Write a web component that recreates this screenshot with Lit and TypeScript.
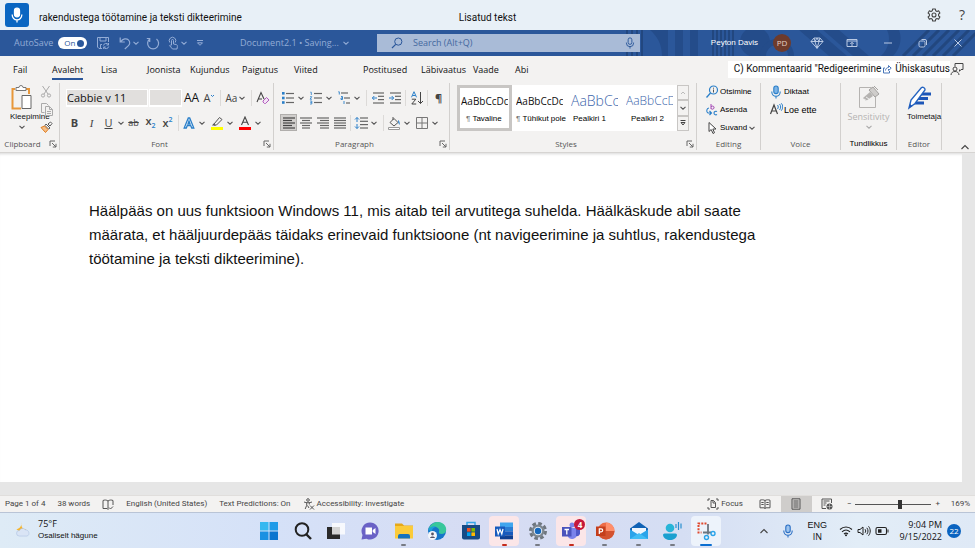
import { LitElement, html, svg, css, TemplateResult, SVGTemplateResult } from "lit";
import { customElement } from "lit/decorators.js";
import { classMap } from "lit/directives/class-map.js";

const art = (w: number, h: number, body: SVGTemplateResult, box = `0 0 ${w} ${h}`) =>
  html`<svg class="art" width=${w} height=${h} viewBox=${box} fill="none" aria-hidden="true">${body}</svg>`;

const chev = (color = "#555") =>
  art(8, 8, svg`<path d="M1.5 2.8 4 5.2 6.5 2.8" stroke=${color} stroke-width="1.1"/>`);

const lines = (rows: number[][], color = "#666") =>
  rows.map(([x1, x2, y]) => svg`<path d="M${x1} ${y}H${x2}" stroke=${color} stroke-width="1.2"/>`);

const mic = (color: string, fill = "none", s = 14) =>
  art(s, s, svg`
    <rect x="4.8" y="1" width="4.4" height="7.6" rx="2.2" stroke=${color} fill=${fill} stroke-width="1.1"/>
    <path d="M2.8 6.5v.6a4.2 4.2 0 0 0 8.4 0v-.6M7 11.3V13.5" stroke=${color} stroke-width="1.1"/>`, "0 0 14 14");

const I = {
  gear: art(14, 14, svg`<g stroke="#444" stroke-width="1.1" stroke-linejoin="round"><path d="M5.7 1h2.6l.4 1.7 1.3.7 1.6-.6 1.3 2.2-1.3 1.2v1.6l1.3 1.2-1.3 2.2-1.6-.6-1.3.7-.4 1.7H5.7l-.4-1.7-1.3-.7-1.6.6L1.1 9l1.3-1.2V6.2L1.1 5l1.3-2.2 1.6.6 1.3-.7z"/><circle cx="7" cy="7" r="2"/></g>`),
  save: art(14, 14, svg`<g stroke="#93acd6"><path d="M12.5 6V1.5h-11V11l1.5 1.5h3M4 1.5V5h6V1.5M4.5 12V8.5H6"/><path d="M7.5 9.5a2.6 2.6 0 0 1 4.8-.8M12.7 10.5a2.6 2.6 0 0 1-4.8.8M12.5 7v2h-2M7.7 13v-2h2"/></g>`),
  undo: art(14, 14, svg`<path d="M2.2 1.5V6h4.6M2.5 5.8C5 2.5 8.5 2 10.4 3.9s1.7 4.3-.2 6L6.8 13" stroke="#93acd6" stroke-width="1.2"/>`),
  redo: art(14, 14, svg`<path d="M3.7 3A5.5 5.5 0 1 0 10.5 3M3.7 6V2.5H.8M10.5 3" stroke="#93acd6" stroke-width="1.2"/>`),
  touch: art(14, 14, svg`<g stroke="#93acd6"><path d="M5.5 9V4.5a1 1 0 0 1 2 0V8l2.8.6c1 .3 1.2 1 1.1 1.9L11 13H6.5L3.5 9.6c.5-.7 1.3-.6 2 .2"/><path d="M3.8 6.5a3.3 3.3 0 1 1 5.4 0"/></g>`),
  more: art(8, 8, svg`<path d="M1 1.5h6M1.5 3.8h5L4 6.3z" stroke="#93acd6"/>`),
  searchBlue: art(12, 12, svg`<circle cx="7.3" cy="4.6" r="3.6" stroke="#2b579a"/><path d="M4.7 7.3 1 11" stroke="#2b579a" stroke-width="1.2"/>`),
  gem: art(14, 12, svg`<path d="M4 1h6l3 3.5-6 6.8L1 4.5zM1 4.5h12M4 1l1 3.5 2 6.8 2-6.8L10 1M7 1 5 4.5M7 1l2 3.5" stroke="#c4d2ea" stroke-width=".9"/>`),
  present: art(12, 10, svg`<path d="M1 1.5h10v7H1zM1 3h10M6 8V4.5M4.3 6 6 4.3 7.7 6" stroke="#b9c9e4"/>`),
  min: art(10, 10, svg`<path d="M1 5h8" stroke="#b9c9e4"/>`),
  restore: art(10, 10, svg`<rect x="1" y="3" width="6" height="6" rx="1.5" stroke="#b9c9e4"/><path d="M3.5 1.5h3.5a1.5 1.5 0 0 1 1.5 1.5v4" stroke="#b9c9e4"/>`),
  close: art(10, 10, svg`<path d="m1.5 1.5 7 7m0-7-7 7" stroke="#b9c9e4"/>`),
  share: art(10, 10, svg`<path d="M3 4H1.5v5h6V7M3.5 6.5C3.7 4.5 5 3.5 6.5 3.5V1.5L9.2 4.2 6.5 6.5v-1.5" stroke="#4a76b8"/>`),
  person: art(14, 14, svg`<g stroke="#444"><path d="M5 4.5V1.5h8v6h-2l-1.5 1.8V7.5"/><circle cx="5" cy="7" r="2"/><path d="M1 13c.2-2.4 1.7-3.5 4-3.5S8.8 10.6 9 13"/></g>`),
  paste: art(24, 26, svg`<path d="M5 4H2.5v19.5H11M16 4h3v5" stroke="#e8973a" stroke-width="2"/><path d="M6 5.5v-3h3a2 2 0 0 1 4 0h3v3z" fill="#fff" stroke="#777"/><path d="M12 10.5h9v13h-9z" fill="#fff" stroke="#666"/>`),
  cut: art(12, 13, svg`<path d="M2.5 1 8 9M9.5 1 4 9" stroke="#aaa"/><circle cx="3" cy="10.5" r="1.6" stroke="#aaa"/><circle cx="9" cy="10.5" r="1.6" stroke="#aaa"/>`),
  copy: art(14, 13, svg`<path d="M4.5 9.5h-3v-9h5l2 2M5.5 3.5h4l3 3v6h-7zM9.5 3.5v3h3" stroke="#aaa"/><path d="M7 8.5h4M7 10.5h4" stroke="#aaa"/>`),
  brush: art(13, 12, svg`<path d="m8 3 2.5-2L12 2.5 10 5z" stroke="#555" fill="#fff"/><path d="m6 3 4 4-1.5 1L5 4.5z" fill="#fff" stroke="#555"/><path d="M4.5 5 8 8.5 5.5 11.5 1 6.5z" fill="#f4c08a" stroke="#e07b1c"/>`),
  launcher: art(8, 8, svg`<path d="M1 6V1h5M3 3l4 4M7 3.8V7H3.8" stroke="#666"/>`),
  eraser: art(14, 14, svg`<path d="M1 11 5 1.5 8 8M2.3 8H6" stroke="#444" stroke-width="1.1"/><path d="m7 10 3.5-3.5 2.5 2.5L9.5 12.5H8.5L7 11z" fill="#f3e3f5" stroke="#b05bbd"/>`),
  glow: art(14, 14, svg`<path d="M2.2 12 6.3 2h1.4L11.8 12H9.7L8.7 9.5H5.3L4.3 12zM7 5 6 7.8h2z" fill="#fff" stroke="#2a7fc9" stroke-width="1.3"/>`),
  pen: art(14, 14, svg`<path d="m4 8 5.5-6.5L12 3.5 6.5 9H4z" stroke="#555"/><path d="M3.5 7.5 2 9.5h4" fill="#555"/><path d="M1 11h12v3H1z" fill="#ffff00"/>`),
  fontColor: art(14, 14, svg`<path d="M3.5 9 7 1l3.5 8M4.7 6.3h4.6" stroke="#444" stroke-width="1.1"/><path d="M1 11h12v3H1z" fill="#f00"/>`),
  bullets: art(14, 14, svg`${lines([[5, 13, 2.5], [5, 13, 7], [5, 13, 11.5]])}<g fill="#2a7fc9"><rect x="1" y="1" width="2.6" height="2.6"/><rect x="1" y="5.7" width="2.6" height="2.6"/><rect x="1" y="10.2" width="2.6" height="2.6"/></g>`),
  numbers: art(14, 14, svg`${lines([[5, 13, 2.5], [5, 13, 7], [5, 13, 11.5]])}<path d="M1.3 1.2h1V4M1 5.7h1.8L1 8.2h2M1 10h1.8v3H1M1.3 11.5h1.5" stroke="#2a7fc9" stroke-width=".8"/>`),
  levels: art(14, 14, svg`${lines([[4, 11, 2], [7, 13, 7], [9, 13, 12]])}<path d="M1.3.8h1v2.7M4 5.5h1.5v3H4V7h1.5M7 10v3" stroke="#2a7fc9" stroke-width=".9"/>`),
  outdent: art(14, 14, svg`${lines([[2, 13, 2], [7, 13, 5.3], [7, 13, 8.6], [2, 13, 12]])}<path d="M6 7H1.5M3.3 5 1.3 7l2 2" stroke="#2a7fc9"/>`),
  indent: art(14, 14, svg`${lines([[2, 13, 2], [7, 13, 5.3], [7, 13, 8.6], [2, 13, 12]])}<path d="M1 7h4.5M3.7 5l2 2-2 2" stroke="#2a7fc9"/>`),
  sort: art(14, 14, svg`<path d="M1.5 6.3 4 .7l2.5 5.6M2.5 4.5h3" stroke="#2a7fc9"/><path d="M1.8 8.2h4L1.8 13h4.4M10.5 1v11.5M8 10l2.5 2.5L13 10" stroke="#444"/>`),
  left: art(14, 14, svg`${lines([[1, 13, 2], [1, 10, 4.5], [1, 13, 7], [1, 10, 9.5], [1, 13, 12]], "#444")}`),
  center: art(14, 14, svg`${lines([[1, 13, 2], [3, 11, 4.5], [1, 13, 7], [3, 11, 9.5], [3, 11, 12]])}`),
  right: art(14, 14, svg`${lines([[1, 13, 2], [4, 13, 4.5], [1, 13, 7], [4, 13, 9.5], [4, 13, 12]])}`),
  justify: art(14, 14, svg`${lines([[1, 13, 2], [1, 13, 4.5], [1, 13, 7], [1, 13, 9.5], [1, 13, 12]])}`),
  spacing: art(14, 14, svg`${lines([[6, 14, 2], [6, 14, 5.3], [6, 14, 8.6], [6, 14, 12]])}<path d="M3 1.5v4.5M1 3.5l2-2 2 2M3 12.5V8M1 10.5l2 2 2-2" stroke="#2a7fc9"/>`),
  bucket: art(14, 14, svg`<path d="M6 1v3M3 6.5 7 2.5l4 4L7 10z" stroke="#555"/><path d="M11 4c1.5 1 2 2.5 1.5 5-1-1-1.5-3-1.5-5z" fill="#2a7fc9"/><path d="M1.5 11.5h11v2h-11z" fill="#fff" stroke="#999"/>`),
  borders: art(14, 14, svg`<path d="M1.5 1.5h11v11h-11zM7 1.5v11M1.5 7h11" stroke="#777"/>`),
  find: art(14, 14, svg`<circle cx="8.5" cy="5" r="4" stroke="#2a7fc9" stroke-width="1.2"/><path d="M5.5 8 1.5 12.5" stroke="#2a7fc9" stroke-width="1.3"/><path d="M8.5 4.5v3M8.5 2.7v1" stroke="#555"/>`),
  replace: art(14, 14, svg`<path d="M6 1v5M6 3.5c2-1 3.5 0 3 1.5S7 6.5 6 5.5" stroke="#a347b5"/><path d="M4 5C1.5 5 1 9 3 10h3M4.5 8 6.5 10l-2 2M12 8.500c-1.500-.8-3 .2-3 1.500s1.500 2.500 3 1.500" stroke="#2a7fc9" stroke-width="1.1"/>`),
  cursor: art(14, 14, svg`<path d="M4 1.5v9l2.2-2L8 12.5l1.5-.8L7.8 8H11z" stroke="#444" fill="#fff"/>`),
  read: art(14, 14, svg`<path d="M1.5 11 5 2l3.5 9M2.7 8h4.6" stroke="#444" stroke-width="1.2"/><path d="M8.5 2c1 1.2 1 2.8 0 4M10.5 1c1.6 1.8 1.6 4.2 0 6M12.3.3c2 2.3 1.7 5 0 7.4" stroke="#2a7fc9"/>`),
  sensitivity: art(24, 24, svg`<path d="M2.5 2.5h12M2.5 2.5v20h16V12" stroke="#b5b3b1" fill="none"/><path d="m6 13 7-6 3 4-7 5z" fill="#b5b3b1"/><path d="m12 5 4-3 6 7-4 3zM17 1l4 4" fill="#cfcdcb" stroke="#a3a19f"/><path d="m7 14 3 2M9 12l3 2" stroke="#eee"/>`),
  editor: art(24, 26, svg`<path d="M13 9h11M10 13.5h11M6.500 18H17" stroke="#1d56b8" stroke-width="3"/><path d="M2 23 4 15 14.500 2.500c1.500-1 4 .8 3.500 2.500L8 18.500z" fill="#fff" stroke="#2463c0" stroke-width="1.4"/><path d="m2 23 1-4 2.5 2z" fill="#1d56b8"/>`),
  up: art(10, 10, svg`<path d="m1.5 7 3.5-3.5L8.5 7" stroke="#444" stroke-width="1.1"/>`),
  book: art(12, 11, svg`<path d="M6 2C4.5.8 2.5.8 1 1.5V9.5H5L6 10.5V2zM6 2C7.5.8 9.5.8 11 1.5V6M7 8.5l1.5 1.5L11 7.5" stroke="#555"/>`),
  access: art(12, 12, svg`<circle cx="5" cy="2" r="1.3" stroke="#555"/><path d="M1 4c2.5 1 5.5 1 8 0M3.7 4.8v2.5L2.2 11M6.3 4.8v1.7M7 7.5l4 4m0-4-4 4M4.500 7.500 6 10" stroke="#555"/>`),
  focus: art(12, 12, svg`<path d="M3 1H1v2M9 1h2v2M3 11H1V9M9 11h2V9M4 2.5h2.5L8.5 4.5v5H4zM6 2.5V5h2" stroke="#555"/>`),
  reading: art(12, 10, svg`<path d="M6 1.5C4.5.6 2.5.6 1 1.2v7.6H5L6 9.5l1-.7h4V1.2C9.5.6 7.5.6 6 1.5zM6 1.5v8M2.3 3.5h2.4M2.3 5.5h2.4M7.3 3.5h2.4M7.3 5.5h2.4" stroke="#555"/>`),
  print: art(10, 12, svg`<path d="M1 .8h8v10.4H1zM2.5 3h5M2.5 5h5M2.5 7h5M2.5 9h5" stroke="#555"/>`),
  web: art(12, 12, svg`<path d="M5 10.5H1V1h9.5v4M2.5 3h6M2.5 5h3M2.5 7h2" stroke="#555"/><circle cx="8.5" cy="8.5" r="3" fill="#555"/><path d="M6 8.5h5M8.5 6v5" stroke="#ccc" stroke-width=".6"/>`),
  weather: art(18, 16, svg`<path d="M8 1c-1 5 1 8 5 8-2 3-8 3-10.5-.5C5.5 8.5 8 6 8 1z" fill="#f7b52c"/><path d="M5.5 16a3 3 0 0 1 .3-6c1-2.5 5-3 6.2-.5 4-.5 5.5 6 1.5 6.5z" fill="#d9e4f5" stroke="#a9bfe0" stroke-width=".6"/>`, "1 0 17 17"),
  wifi: art(14, 12, svg`<g stroke="#222" stroke-width="1.1"><path d="M1 4.5c3.5-3.3 8.5-3.3 12 0M3 6.8c2.4-2.2 5.6-2.2 8 0M5 9c1.3-1.2 2.7-1.2 4 0"/></g><circle cx="7" cy="10.3" r="1" fill="#222"/>`),
  volume: art(14, 12, svg`<path d="M1 4.5h2L6 2v8L3 7.5H1zM8 4.2c.9 1 .9 2.6 0 3.6M9.8 2.8c1.6 1.9 1.6 4.5 0 6.4M11.5 1.3c2.3 2.7 2.3 6.7 0 9.4" stroke="#222"/>`),
  battery: art(14, 10, svg`<rect x="1" y="1.5" width="10.5" height="7" rx="1.5" stroke="#222" stroke-width="1.1"/><path d="M3 3.3h3.5v3.4H3zM12.5 3.5h1v3h-1z" fill="#222"/>`),
};

const APPS: { name: string; icon: TemplateResult; dot?: string; bg?: string }[] = [
  { name: "Start", icon: art(20, 20, svg`<g><path d="M1 1h8.5v8.5H1z" fill="#36b8f0"/><path d="M10.5 1H19v8.5h-8.5z" fill="#1f9be8"/><path d="M1 10.5h8.5V19H1z" fill="#1a91e2"/><path d="M10.5 10.5H19V19h-8.5z" fill="#0a75cf"/></g>`) },
  { name: "Search", icon: art(20, 20, svg`<circle cx="9" cy="8.5" r="6.3" stroke="#222" stroke-width="2"/><path d="m13.5 13.5 4.5 4.5" stroke="#222" stroke-width="2.4"/>`) },
  { name: "Task view", icon: art(20, 20, svg`<path d="M1 6h13v12H1z" fill="#2a2a2a"/><path d="M6 2h13v11.5H6z" fill="#fff" opacity=".8"/>`) },
  { name: "Chat", icon: art(20, 20, svg`<path d="M10 1.5a8.5 8.5 0 1 1-3.5 16.2L1.5 18.5 2.5 14A8.5 8.5 0 0 1 10 1.5z" fill="#6a62c6"/><path d="M5.5 6.5h6.5v7H5.5zM12.7 9l2.8-2v6l-2.8-2z" fill="#fff"/>`) },
  { name: "File Explorer", dot: "grey", icon: art(20, 20, svg`<path d="M1 2.5h7l2 2H19V17H1z" fill="#e6a81a"/><path d="M1 5h18v12.5H1z" fill="#fbcb3a"/><path d="M4 17.5V15a2 2 0 0 1 2-2h8a2 2 0 0 1 2 2v2.5z" fill="#1572bd"/>`) },
  { name: "Edge", icon: art(20, 20, svg`<circle cx="10" cy="10" r="9" fill="#1676c9"/><path d="M1.5 9C2.5 3.5 7 1 11 1c5 0 8.5 4 8.2 8-.2 2.5-2.2 4-4.7 4-2 0-3-.8-2.5-2 1-3-1.5-5-4.5-5S2.5 7 1.5 9z" fill="#38c79b"/><path d="M1.5 9C3 5.5 7 4.5 9.5 6c-3 0-5 2.5-4.5 5z" fill="#1b9fd8"/><circle cx="5.5" cy="14.5" r="4.5" fill="#f4f6fa"/><circle cx="5.5" cy="13" r="1.4" fill="#556"/><path d="M3 17c.3-2 4.7-2 5 0z" fill="#556"/>`) },
  { name: "Store", icon: art(20, 20, svg`<path d="M6 4V1.5h8V4" stroke="#35a7e8" stroke-width="1.5"/><path d="M1 4h18v12.5a2 2 0 0 1-2 2H3a2 2 0 0 1-2-2z" fill="#164b85"/><path d="M6 7h3.6v3.6H6z" fill="#f25022"/><path d="M10.4 7H14v3.6h-3.6z" fill="#7fba00"/><path d="M6 11.4h3.6V15H6z" fill="#00a4ef"/><path d="M10.4 11.4H14V15h-3.6z" fill="#ffb900"/>`) },
  { name: "Word", dot: "red", bg: "warm", icon: art(20, 20, svg`<path d="M6 1.5h13v4.5H6z" fill="#41a5ee"/><path d="M6 6h13v4.3H6z" fill="#2b7cd3"/><path d="M6 10.3h13v4H6z" fill="#185abd"/><path d="M6 14.3h13v4H6z" fill="#103f91"/><path d="M1 5.5h10v10H1z" fill="#185abd"/><path d="m3 8 1.2 5L6 8.5 7.8 13 9 8" stroke="#fff" stroke-width="1.2"/>`) },
  { name: "Settings", dot: "grey", icon: art(20, 20, svg`<circle cx="10" cy="10" r="7.5" stroke="#6f777f" stroke-width="3" stroke-dasharray="3.6 2.29"/><circle cx="10" cy="10" r="6.5" fill="#7d868e"/><circle cx="10" cy="10" r="4.2" fill="#e6edf5"/><circle cx="10" cy="10" r="3.2" fill="#1669bd"/>`) },
  { name: "Teams", dot: "red", bg: "warm", icon: art(20, 20, svg`<circle cx="11" cy="4" r="2.5" fill="#7b83eb"/><path d="M7 7h9v6a5 5 0 0 1-9 3z" fill="#7b83eb"/><path d="M15 8h4v4.5a3 3 0 0 1-4 2.5z" fill="#5059c9"/><path d="M1 6h9.5v9.5H1z" fill="#4b53bc"/><path d="M3.5 8.5H8M5.8 8.5V13.5" stroke="#fff" stroke-width="1.3"/>`) },
  { name: "PowerPoint", dot: "grey", icon: art(20, 20, svg`<circle cx="11" cy="10" r="8.5" fill="#ed6c47"/><path d="M11 1.5a8.5 8.5 0 0 1 8.5 8.5H11z" fill="#ff8f6b"/><path d="M19.5 10a8.5 8.5 0 0 1-17 0z" fill="#d35230"/><path d="M1 5.5h9.5v9.5H1z" fill="#c43e1c"/><path d="M4.3 13V7.8h1.9a1.5 1.5 0 0 1 0 3H4.3" stroke="#fff" stroke-width="1.2"/>`) },
  { name: "Mail", dot: "grey", icon: art(20, 20, svg`<path d="M1 7.5 10 1l9 6.5V18H1z" fill="#1062b5"/><path d="M3 7h14v6l-7 3-7-3z" fill="#eef6fd"/><path d="M1 8.5 10 14l9-5.5V18H1z" fill="#2aa4ea"/><path d="m1 18 9-6 9 6z" fill="#41bdf5"/>`) },
  { name: "Voice Access", dot: "grey", icon: art(20, 20, svg`<circle cx="8" cy="7" r="4.3" fill="#28b5d8"/><path d="M1 14a1.5 1.5 0 0 1 1.5-1.5h11A1.5 1.5 0 0 1 15 14c-.5 3.5-3.5 5-7 5s-6.500-1.500-7-5z" fill="#1ba0d0"/><path d="M14 3v4M16.500 1v8M19 2.500v5" stroke="#2a8fd0" stroke-width="1.2"/>`) },
  { name: "Snipping Tool", dot: "active", bg: "cool", icon: art(20, 20, svg`<path d="M10.5 2.5H2.5v9h3" stroke="#e0492e" stroke-width="2" stroke-dasharray="2 1.2"/><path d="M12 3v10.5M7 11.5h8" stroke="#6b7680" stroke-width="1.8"/><circle cx="10.5" cy="16.500" r="2" stroke="#2aa4ea" stroke-width="1.4"/><circle cx="17" cy="12.5" r="2" stroke="#2aa4ea" stroke-width="1.4"/>`) },
];

const STYLES = [
  { sample: "AaBbCcDc", name: "Tavaline", mark: true, kind: "on" },
  { sample: "AaBbCcDc", name: "Tühikut pole", mark: true, kind: "plain" },
  { sample: "AaBbCc", name: "Pealkiri 1", mark: false, kind: "h1" },
  { sample: "AaBbCcD", name: "Pealkiri 2", mark: false, kind: "h2" },
];

const TABS = ["Fail", "Avaleht", "Lisa", "Joonista", "Kujundus", "Paigutus", "Viited", "Postitused", "Läbivaatus", "Vaade", "Abi"];

@customElement("app-root")
export class AppRoot extends LitElement {
  static styles = css`
    :host { display: flex; flex-direction: column; min-height: 100vh; color: #111; background: #e6e6e6;
      font: 9px/12px "Open Sans", "Noto Sans", sans-serif; }
    *, *::before, *::after { box-sizing: border-box; }
    button, input { font: inherit; color: inherit; margin: 0; padding: 0; border: 0; background: none; }
    button { display: flex; align-items: center; justify-content: center; white-space: nowrap; }
    .art { display: block; flex: none; }
    .row { display: flex; align-items: center; }
    .arial { font-family: "Liberation Sans", Arial, sans-serif; }

    .voice { display: grid; grid-template-columns: 1fr auto 1fr; align-items: center; height: 30px;
      background: #e8f0f7; font-family: Roboto, sans-serif; font-size: 10px; }
    .voice .speech-in { gap: 10px; }
    .voice .mic { width: 24px; height: 24px; margin-left: 5px; border-radius: 3px; background: #0a66c2; }
    .voice .said, .voice .state { padding-top: 5px; white-space: nowrap; }
    .voice .tools { justify-content: flex-end; gap: 18px; padding-right: 10px; }
    .voice .help { font: 14px/16px "Open Sans", sans-serif; color: #444; }

    .title { position: relative; display: flex; align-items: center; height: 26px; background: #2b579a;
      color: #93acd6; overflow: hidden; }
    .title .pattern { position: absolute; right: 0; top: 0; }
    .title > .row, .title > .search { position: relative; }
    .title .quick { width: 240px; padding-left: 14px; }
    .title .switch { width: 29px; height: 12px; margin: 0 9px 0 5px; padding: 0 3px 0 6px; border-radius: 6px; background: #fff;
      color: #2b579a; font-size: 8px; justify-content: space-between; }
    .title .knob { width: 7px; height: 7px; border-radius: 50%; background: #2b579a; }
    .title .undo { margin-left: 8px; }
    .title .step { margin-left: 6px; }
    .title .doc { width: 137px; gap: 3px; justify-content: flex-start; }
    .title .search { display: flex; align-items: center; flex: 1; max-width: 263px; height: 18px; padding: 0 4px 0 14px;
      background: #a9bbd7; color: #2b579a; }
    .search input { flex: 1; min-width: 0; margin-left: 10px; outline: none; }
    .search input::placeholder { color: #45699f; opacity: 1; }
    .title .account { margin-left: auto; padding-right: 12px; color: #fff; gap: 25px; }
    .account .who { gap: 15px; font-size: 8px; }
    .account .premium { gap: 19px; margin-right: -3px; }
    .account .face { width: 18px; height: 18px; border-radius: 50%; background: #6e3b2c; color: #e8cfc4;
      line-height: 18px; text-align: center; }

    .tabs { display: flex; align-items: center; height: 26px; background: #f3f2f1; }
    .tablist { display: grid; flex: 1;
      grid-template-columns: 39px 49px 46px 43px 52px 52px 69px 58px 52px 42px 30px; padding: 4px 0 0 13px; }
    .tab { justify-content: flex-start; height: 20px; font-size: 9px; }
    .tab span { padding: 2px 0; border-bottom: 2px solid transparent; }
    .tab.on span { border-color: #2b579a; }
    .tabs .actions { padding-right: 11px; font-family: Roboto, sans-serif; font-size: 10px; }
    .actions button { justify-content: flex-start; height: 17px; background: #fff; }
    .actions .comments { padding: 0 1px 0 6px; }
    .actions .share { gap: 3px; }
    .actions .person { background: none; }

    .ribbon { display: flex; height: 71px; background: #f3f2f1; border-bottom: 1px solid #d6d4d2; }
    .group { display: flex; flex-direction: column; flex: none; margin: 1px 0 2px; border-right: 1px solid #d2d0ce; }
    .group .body { flex: 1; }
    .group .foot { display: grid; grid-template-columns: 1fr; align-items: center; height: 13px; color: #555;
      font-size: 8px; text-align: center; white-space: nowrap; }
    .group .foot.launch { grid-template-columns: 1fr 12px; }
    .group .foot.launch span { padding-right: 2px; }
    .group .foot.dark { color: #000; }
    .clipboard { width: 60px; } .font { width: 214px; } .para { width: 176px; } .styles { width: 247px; }
    .editing { width: 64px; } .speech { width: 80px; } .sens { width: 56px; } .edit { width: 45px; }
    .clipboard .body { display: grid; grid-template-columns: 30px 1fr; padding: 2px 0 0 10px; }
    .clipboard .paste { flex-direction: column; justify-content: flex-start; align-items: flex-start; font-size: 8px; line-height: 12px; }
    .clipboard .paste .art + span + .art, .clipboard .paste span ~ .art { margin-left: 8px; }
    .clipboard .side { display: flex; flex-direction: column; justify-content: space-between; padding-bottom: 4px; }
    .clipboard .side button { justify-content: flex-start; }
    .cmds { height: 25px; }
    .font .body, .para .body { padding: 2px 0 0 6px; }
    .cell { width: 17px; height: 17px; }
    .cell.on { background: #d0cecc; outline: 1px solid #b0aeac; outline-offset: -1px; }
    .split { width: 28px; height: 17px; justify-content: flex-start; padding-left: 1px; gap: 2px; }
    .bar { width: 1px; height: 16px; margin: 0 2px; background: #dcdad8; }
    .box { height: 18px; border: 1px solid #fff; border-bottom-width: 2px; background: #e1dfdd; font-size: 11px; }
    .box.name { width: 82px; } .box.size { width: 33px; margin-left: 1px; }
    .glyph { font-size: 11px; color: #444; }
    .b { font-weight: 700; } .i { font-style: italic; font-family: "Liberation Serif", serif; }
    .u { text-decoration: underline; } .s { text-decoration: line-through; font-size: 9px; }
    .big { width: 19px; font-size: 12px; color: #111; }
    .script { font-weight: 600; }
    .glyph sub, .glyph sup { font-size: 7px; line-height: 7px; color: #2a7fc9; }
    .case { width: 26px; gap: 1px; font-size: 10px; color: #444; }

    .group .gallery { display: grid; flex: none; grid-template-columns: repeat(4, 55px) 12px; margin: 2px 0 auto 7px; height: 46px; }
    .style { flex-direction: column; justify-content: flex-start; align-items: flex-start; overflow: hidden; background: #fff;
      padding: 7px 3px 0; border: 1px solid #fff; }
    .style.on { padding: 5px 1px 0; border: 3px solid #c8c6c4; }
    .style .sample { height: 18px; width: 100%; line-height: 16px; font-size: 10px; text-align: left; overflow: hidden; }
    .style .name { padding: 2px 0 0 5px; font-size: 8px; color: #000; }
    .style .name i { font-style: normal; color: #777; }
    .style.plain .name { padding-left: 0; }
    .style.h1 .name { padding-left: 2px; }
    .style.h1 .sample, .style.h2 .sample { color: #3d66ab; font-weight: 300; }
    .style.h1 .sample { font-size: 14px; }
    .style.h2 .sample { font-size: 12px; }
    .scroll { display: grid; grid-template-rows: 1fr 1fr 1fr; }
    .scroll button { border: 1px solid #c8c6c4; }
    .list { display: flex; flex-direction: column; gap: 3px; padding: 1px 0 0 8px; align-items: flex-start; color: #000; }
    .list button { gap: 1px; height: 15px; font-size: 8px; }
    .list .wide { font-size: 9px; }
    .tall { flex-direction: column; width: 100%; font-size: 9px; padding-top: 2px; }
    .tall.off { color: #b5b3b1; }
    .edit .tall { align-items: flex-start; padding-left: 10px; font-size: 8px; }
    .sens .tall .art { margin-bottom: 2px; }
    .collapse { margin: auto 5px 0 auto; }

    .canvas { display: flex; flex: 1; padding-right: 13px; }
    .page { flex: 1; margin-bottom: 13px; background: #fff; box-shadow: inset 0 3px 3px -2px #d8d8d8; padding: 46px 90px 20px 89px; }
    .page p { max-width: 670px; margin: 0; font: 15px/24px "Liberation Sans", Arial, sans-serif; color: #111; }

    .status { display: flex; align-items: center; height: 17px; padding: 0 5px; background: #f3f2f1; color: #444;
      font-family: Roboto, sans-serif; font-size: 8px; white-space: nowrap; border-top: 1px solid #e0dedc; }
    .status .facts { flex: 1; gap: 12px; }
    .status .facts button { gap: 2px; }
    .status .focus { gap: 2px; margin-right: 7px; }
    .status .view { width: 31px; height: 16px; }
    .status .view.on { background: #cfcdcb; }
    .status .out { margin-left: 4px; }
    .zoom { -webkit-appearance: none; appearance: none; width: 76px; height: 12px; margin: 0 4px;
      background: linear-gradient(#555, #555) center / 100% 1px no-repeat; }
    .zoom::-webkit-slider-thumb { -webkit-appearance: none; width: 4px; height: 9px; background: #333; }
    .status .percent { width: 24px; margin-left: 6px; text-align: right; }

    .taskbar { display: grid; grid-template-columns: 1fr 470px 1fr; align-items: center; height: 36px;
      border-top: 1px solid #b9c4d6; background: linear-gradient(90deg, #deebf6, #d5e1f8 28%, #d6dcf3 50%, #d5def3 70%, #e2edf7 88%, #dfe9f6); }
    .weather { padding: 0 0 3px 14px; }
    .weather b { font-weight: 400; display: block; text-align: left; }
    .weather .arial { font-size: 8px; line-height: 11px; }
    .weather button { gap: 6px; }
    .apps { display: grid; grid-template-columns: repeat(14, 1fr); }
    .app { position: relative; justify-self: center; width: 30px; height: 30px; border-radius: 4px; flex-direction: column; }
    .app.warm { background: #fbe6e8; }
    .app.cool { background: #edf3fb; }
    .dot { position: absolute; bottom: 0; width: 5px; height: 2px; border-radius: 1px; }
    .dot.active { width: 12px; background: #0a6ed1; }
    .dot.grey { background: #777b84; }
    .dot.red { background: #c42b1c; }
    .badge { position: absolute; top: 3px; right: 1px; width: 11px; height: 11px; border-radius: 50%; background: #c4183c; color: #fff;
      font: 700 8px/11px "Open Sans", sans-serif; text-align: center; }
    .tray { justify-content: flex-end; padding-right: 14px; line-height: 12px; }
    .tray .mic { margin-left: 12px; }
    .tray .lang { width: 24px; margin: 0 10px; text-align: center; font-size: 9px; }
    .tray .net { gap: 4px; }
    .tray .clock { margin: 0 5px 0 10px; text-align: right; white-space: nowrap; }
    .tray .count { width: 14px; height: 14px; border-radius: 50%; background: #0a63c0; color: #fff; font-size: 8px; line-height: 14px; text-align: center; }
  `;

  private foot(label: string, launch = true, dark = false) {
    return html`<div class=${classMap({ foot: true, launch, dark, arial: dark })}><span>${label}</span>${launch
      ? html`<button aria-label="${label} options">${I.launcher}</button>` : ""}</div>`;
  }

  private cell(label: string, body: unknown, cls = "") {
    return html`<button class="cell ${cls}" aria-label=${label}>${body}</button>`;
  }

  private split(label: string, body: unknown) {
    return html`<button class="split" aria-label=${label}>${body}${chev()}</button>`;
  }

  render() {
    const bar = html`<i class="bar"></i>`;
    return html`
      <header class="voice">
        <div class="row speech-in">
          <button class="mic" aria-label="Microphone">${mic("#fff", "#fff", 16)}</button>
          <span class="said">rakendustega töötamine ja teksti dikteerimine</span>
        </div>
        <span class="state">Lisatud tekst</span>
        <div class="row tools"><button aria-label="Settings">${I.gear}</button><button class="help" aria-label="Help">?</button></div>
      </header>

      <div class="title">
        <svg class="pattern" width="350" height="26" viewBox="0 0 350 26" fill="none" aria-hidden="true">
          <g stroke="#22477f" stroke-width="2"><path d="M2 0v26M7 0v26M12 0v26M17 0v26M88 0v26M92 0v26M96 0v26M100 0v26M104 0v26M108 0v26"/></g>
          <g fill="#244c8a"><path d="M25 0h18v26H37C37 14 32 6 25 0zM50 0h8v26h-8zM65 0h8v26h-8z"/><path d="m174 0h18l30 26h-18zM198 0h16l30 26h-16z"/><path d="M262 0h12c4 10 0 20-6 26h-12c8-8 10-18 6-26z"/></g>
          <circle cx="130" cy="12" r="15" fill="#244c8a"/>
          <circle cx="152" cy="26" r="14" stroke="#244c8a" stroke-width="6"/>
          <g stroke="#22477f" stroke-width="3"><path d="m278 26 26-26M288 26l26-26M298 26l26-26M308 26l26-26M318 26l26-26M328 26l26-26"/></g>
        </svg>
        <div class="row quick">
          <span>AutoSave</span>
          <button class="switch" role="switch" aria-checked="true" aria-label="AutoSave">On<i class="knob"></i></button>
          <button aria-label="Save">${I.save}</button>
          <button class="undo" aria-label="Undo">${I.undo}${chev("#93acd6")}</button>
          <button class="step" aria-label="Redo">${I.redo}</button>
          <button class="step" aria-label="Touch mode">${I.touch}${chev("#93acd6")}</button>
          <button class="undo" aria-label="More commands">${I.more}</button>
        </div>
        <button class="row doc">Document2.1 • Saving... ${chev("#93acd6")}</button>
        <label class="search">${I.searchBlue}<input type="text" placeholder="Search (Alt+Q)" aria-label="Search" />${mic("#2b579a", "none", 12)}</label>
        <div class="row account">
          <div class="row premium">
            <div class="row who"><span class="arial">Peyton Davis</span><span class="face">PD</span></div>
            <button aria-label="Premium">${I.gem}</button>
          </div>
          <button aria-label="Ribbon display">${I.present}</button>
          <button aria-label="Minimize">${I.min}</button>
          <button aria-label="Restore">${I.restore}</button>
          <button aria-label="Close">${I.close}</button>
        </div>
      </div>

      <div class="tabs">
        <nav class="tablist">${TABS.map((t) => html`<button class=${classMap({ tab: true, on: t === "Avaleht" })}><span>${t}</span></button>`)}</nav>
        <div class="row actions">
          <button class="comments">C) Kommentaarid "Redigeerimine</button>
          <button class="share">${I.share}Ühiskasutus</button>
          <button class="person" aria-label="Account">${I.person}</button>
        </div>
      </div>

      <div class="ribbon">
        <section class="group clipboard">
          <div class="body">
            <button class="paste arial">${I.paste}<span>Kleepimine</span>${chev()}</button>
            <div class="side"><button aria-label="Cut">${I.cut}</button><button aria-label="Copy">${I.copy}</button><button aria-label="Format painter">${I.brush}</button></div>
          </div>
          ${this.foot("Clipboard")}
        </section>

        <section class="group font">
          <div class="body">
            <div class="row cmds">
              <input class="box name" aria-label="Font name" value="Cabbie v 11" /><input class="box size" aria-label="Font size" />
              ${this.cell("Grow font", "AA", "big")}${this.cell("Shrink font", html`A${art(5, 8, svg`<path d="M1 1 2.5 2.5 4 1" stroke="#2a7fc9"/>`)}`, "glyph")}
              ${bar}<button class="case" aria-label="Change case">Aa${chev()}</button>${bar}${this.cell("Clear formatting", I.eraser)}
            </div>
            <div class="row cmds">
              ${this.cell("Bold", "B", "glyph b")}${this.cell("Italic", "I", "glyph i")}${this.cell("Underline", "U", "glyph u")}
              <button aria-label="Underline style">${chev()}</button>
              ${this.cell("Strikethrough", "ab", "glyph s")}
              ${this.cell("Subscript", html`<span>x<sub>2</sub></span>`, "glyph script")}${this.cell("Superscript", html`<span>x<sup>2</sup></span>`, "glyph script")}
              ${bar}${this.split("Text effects", I.glow)}${this.split("Highlight", I.pen)}${this.split("Font colour", I.fontColor)}
            </div>
          </div>
          ${this.foot("Font")}
        </section>

        <section class="group para">
          <div class="body">
            <div class="row cmds">
              ${this.split("Bullets", I.bullets)}${this.split("Numbering", I.numbers)}${this.split("Multilevel list", I.levels)}
              ${bar}${this.cell("Decrease indent", I.outdent)}${this.cell("Increase indent", I.indent)}
              ${bar}${this.cell("Sort", I.sort)}${bar}${this.cell("Show marks", "¶", "glyph b")}
            </div>
            <div class="row cmds">
              ${this.cell("Align left", I.left, "on")}${this.cell("Centre", I.center)}${this.cell("Align right", I.right)}${this.cell("Justify", I.justify)}
              ${bar}${this.split("Line spacing", I.spacing)}${bar}${this.split("Shading", I.bucket)}${this.split("Borders", I.borders)}
            </div>
          </div>
          ${this.foot("Paragraph")}
        </section>

        <section class="group styles">
          <div class="gallery">
            ${STYLES.map((s) => html`<button class="style ${s.kind}">
              <span class="sample">${s.sample}</span><span class="name arial">${s.mark ? html`<i>¶ </i>` : ""}${s.name}</span></button>`)}
            <div class="scroll">
              <button aria-label="Previous styles">${art(8, 8, svg`<path d="M2 5 4 3l2 2" stroke="#bbb"/>`)}</button>
              <button aria-label="Next styles">${chev()}</button>
              <button aria-label="All styles">${art(8, 8, svg`<path d="M1.5 1.5h5M2 3.5h4L4 6z" stroke="#444"/>`)}</button>
            </div>
          </div>
          ${this.foot("Styles")}
        </section>

        <section class="group editing">
          <div class="body list arial">
            <button>${I.find}Otsimine</button><button>${I.replace}Asenda</button><button>${I.cursor}Suvand${chev()}</button>
          </div>
          ${this.foot("Editing", false)}
        </section>

        <section class="group speech">
          <div class="body list arial">
            <button>${mic("#2a7fc9", "#7db4e6")}Diktaat</button><button class="wide">${I.read}Loe ette</button>
          </div>
          ${this.foot("Voice", false)}
        </section>

        <section class="group sens">
          <div class="body"><button class="tall off" disabled>${I.sensitivity}<span>Sensitivity</span>${chev("#aaa")}</button></div>
          ${this.foot("Tundlikkus", false, true)}
        </section>

        <section class="group edit">
          <div class="body"><button class="tall arial">${I.editor}<span>Toimetaja</span></button></div>
          ${this.foot("Editor", false)}
        </section>
        <button class="collapse" aria-label="Collapse ribbon">${I.up}</button>
      </div>

      <main class="canvas">
        <article class="page">
          <p>Häälpääs on uus funktsioon Windows 11, mis aitab teil arvutitega suhelda. Häälkäskude abil saate määrata, et hääljuurdepääs täidaks erinevaid funktsioone (nt navigeerimine ja suhtlus, rakendustega töötamine ja teksti dikteerimine).</p>
        </article>
      </main>

      <footer class="status">
        <div class="row facts">
          <span>Page 1 of 4</span><span>38 words</span><button aria-label="Proofing">${I.book}</button>
          <span>English (United States)</span><span>Text Predictions: On</span><button>${I.access}Accessibility: Investigate</button>
        </div>
        <button class="focus">${I.focus}Focus</button>
        <button class="view" aria-label="Read mode">${I.reading}</button>
        <button class="view on" aria-label="Print layout">${I.print}</button>
        <button class="view" aria-label="Web layout">${I.web}</button>
        <button class="out" aria-label="Zoom out">−</button>
        <input class="zoom" type="range" min="0" max="100" value="59" aria-label="Zoom" />
        <button aria-label="Zoom in">+</button>
        <span class="percent">169%</span>
      </footer>

      <footer class="taskbar">
        <div class="row weather"><button>${I.weather}<span><b>75°F</b><b class="arial">Osaliselt hägune</b></span></button></div>
        <div class="apps">${APPS.map((a) => html`<button class="app ${a.bg ?? ""}" aria-label=${a.name}>${a.icon}
          ${a.dot ? html`<i class="dot ${a.dot}"></i>` : ""}
          ${a.name === "Teams" ? html`<span class="badge">4</span>` : ""}</button>`)}</div>
        <div class="row tray">
          <button aria-label="Hidden icons">${I.up}</button>
          <button class="mic" aria-label="Microphone">${mic("#2a6fc4", "#9cc3ee")}</button>
          <div class="lang"><div class="arial">ENG</div><div>IN</div></div>
          <button class="net" aria-label="Network, volume, battery">${I.wifi}${I.volume}${I.battery}</button>
          <div class="clock"><div>9:04 PM</div><div>9/15/2022</div></div>
          <span class="count">22</span>
        </div>
      </footer>
    `;
  }
}
